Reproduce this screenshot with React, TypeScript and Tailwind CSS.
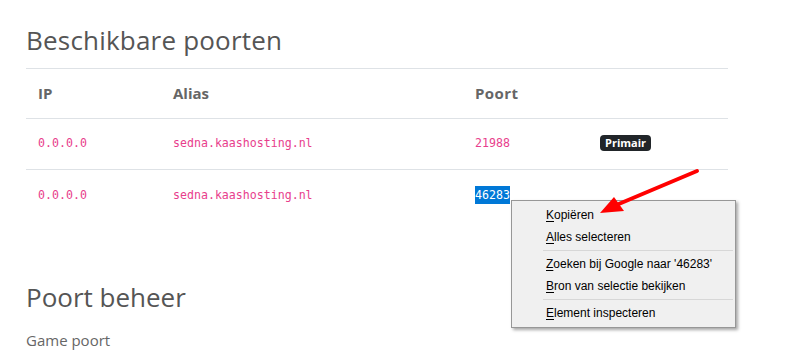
import React from "react";

const rows = [
  { ip: "0.0.0.0", alias: "sedna.kaashosting.nl", port: "21988", primary: true },
  { ip: "0.0.0.0", alias: "sedna.kaashosting.nl", port: "46283", primary: false },
];

const menu = [
  [{ key: "K", rest: "opiëren" }, { key: "A", rest: "lles selecteren" }],
  [{ key: "Z", rest: "oeken bij Google naar '46283'" }, { key: "B", rest: "ron van selectie bekijken" }],
  [{ key: "E", rest: "lement inspecteren" }],
];

function ContextMenu() {
  return (
    <div
      className="absolute left-[511px] top-[200px] w-[225px] bg-[#f0f0f0] border border-[#979797] py-[3px] shadow-[2px_2px_3px_rgba(0,0,0,0.35)] text-[12px] text-black"
      style={{ fontFamily: "'Liberation Sans', Arial, sans-serif" }}
    >
      {menu.map((group, gi) => (
        <div key={gi}>
          {gi > 0 && <div className="ml-[31px] mr-[2px] my-[2px] h-px bg-[#d7d7d7]" />}
          {group.map((item) => (
            <div key={item.key} className="h-[22px] pl-[34px] flex items-center leading-none">
              <span className="underline underline-offset-2">{item.key}</span>
              <span>{item.rest}</span>
            </div>
          ))}
        </div>
      ))}
    </div>
  );
}

function Arrow() {
  return (
    <svg className="absolute left-0 top-0" width="792" height="352" viewBox="0 0 792 352">
      <line x1="697" y1="171" x2="614" y2="206" stroke="#f00" strokeWidth="4" strokeLinecap="round" />
      <polygon points="600,213 614,197 624,211" fill="#f00" />
    </svg>
  );
}

export default function App() {
  const mono = { fontFamily: "'DejaVu Sans Mono', 'Liberation Mono', monospace" };
  return (
    <div
      className="relative w-[792px] h-[352px] overflow-hidden bg-white text-[#5b5b5b]"
      style={{ fontFamily: "'Open Sans', 'Noto Sans', sans-serif" }}
    >
      <div className="pl-[26px] pt-[22px] w-[728px]">
        <h2 className="text-[26px] leading-[36px] font-normal text-[#555] tracking-[0.2px] pb-[10px] border-b border-[#dee2e6]">
          Beschikbare poorten
        </h2>
        <div className="grid grid-cols-[135px_302px_125px_1fr] items-center">
          <div className="col-span-4 grid grid-cols-subgrid h-[50px] items-center border-b border-[#dee2e6] text-[15px] font-bold text-[#666]">
            <div className="pl-[12px]">IP</div>
            <div className="pl-[12px]">Alias</div>
            <div className="pl-[12px] tracking-[0.4px]">Poort</div>
            <div />
          </div>
          {rows.map((r, i) => (
            <div
              key={i}
              className={`col-span-4 grid grid-cols-subgrid items-center text-[11.6px] text-[#e83e8c] ${i === 0 ? "h-[51px] border-b border-[#dee2e6]" : "h-[52px]"}`}
              style={mono}
            >
              <div className="pl-[12px]">{r.ip}</div>
              <div className="pl-[12px]">{r.alias}</div>
              <div className="pl-[12px]">
                {r.primary ? (
                  r.port
                ) : (
                  <span className="bg-[#0078d7] text-white py-[2px]">{r.port}</span>
                )}
              </div>
              <div className="pl-[12px]">
                {r.primary && (
                  <span
                    className="inline-block bg-[#212529] text-white text-[11px] font-bold px-[5px] py-[1px] rounded-[4px] leading-[14px]"
                    style={{ fontFamily: "'Open Sans', sans-serif" }}
                  >
                    Primair
                  </span>
                )}
              </div>
            </div>
          ))}
        </div>
        <h2 className="mt-[57px] text-[26px] leading-[36px] font-normal text-[#555]">Poort beheer</h2>
        <p className="mt-[14px] text-[15px] text-[#666]">Game poort</p>
      </div>
      <ContextMenu />
      <Arrow />
    </div>
  );
}
